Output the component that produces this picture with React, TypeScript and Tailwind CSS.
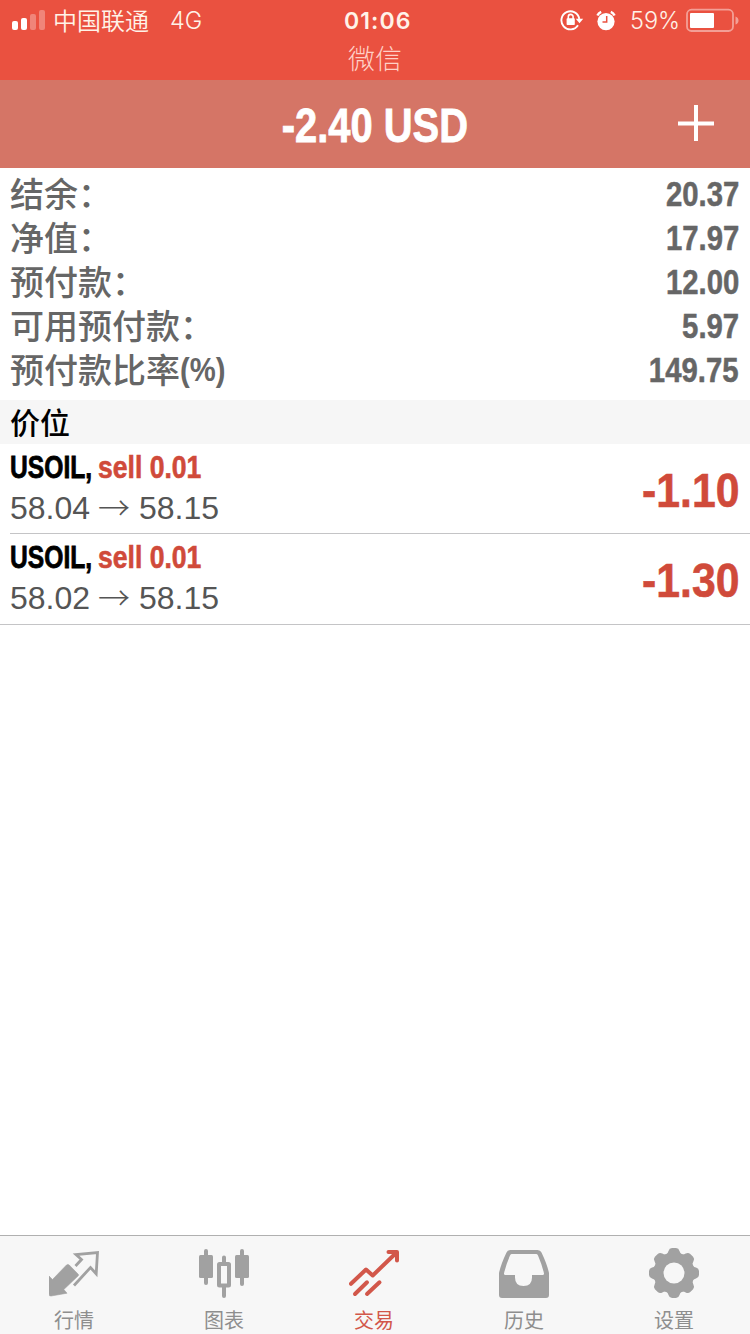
import type { ReactNode } from "react"

const RED = "#d2574a"

const ACCOUNT = [
  { label: "结余：", value: "20.37" },
  { label: "净值：", value: "17.97" },
  { label: "预付款：", value: "12.00" },
  { label: "可用预付款：", value: "5.97" },
  { label: "预付款比率", suffix: "(%)", value: "149.75" },
]

const POSITIONS = [
  { symbol: "USOIL,", side: "sell 0.01", open: "58.04", current: "58.15", profit: "-1.10" },
  { symbol: "USOIL,", side: "sell 0.01", open: "58.02", current: "58.15", profit: "-1.30" },
]

function StatusBar() {
  return (
    <div className="h-20 bg-[#ea5140] text-[#fff3e8]">
      <div className="relative flex h-10 items-center pl-3 pr-[11px]">
        <svg width="34" height="20" viewBox="0 0 34 20" fill="#fff">
          <rect x="0" y="11" width="6" height="9" rx="2" />
          <rect x="9" y="8" width="6" height="12" rx="2" />
          <rect x="18" y="4" width="6" height="16" rx="2" opacity="0.3" />
          <rect x="27" y="0" width="6" height="20" rx="2" opacity="0.3" />
        </svg>
        <span className="ml-[7px] w-[117px] font-['Noto_Sans_CJK_SC',sans-serif] text-[24px] leading-10 font-[350]">中国联通</span>
        <span className="pt-0.5 font-[Inter,sans-serif] text-[23.5px] leading-10 font-light">4G</span>
        <span className="absolute left-[344px] top-0 font-[Inter,sans-serif] text-[23px] leading-[43px] font-semibold tracking-[1.1px]">
          01:06
        </span>

        <div className="ml-auto flex items-center">
          {/* Rotation lock */}
          <svg width="24" height="22" viewBox="0 0 24 22" fill="none">
            <path d="M18 16.200A9 9 0 1 1 19.300 10" stroke="#fff" strokeWidth="1.9" />
            <path d="M15.800 9.800h7.400l-3.700 4.400z" fill="#fff" />
            <rect x="6.600" y="9.300" width="8.200" height="6.700" rx="0.8" fill="#fff" />
            <path d="M8.300 10V7.800a2.400 2.400 0 0 1 4.800 0V10" stroke="#fff" strokeWidth="1.600" />
          </svg>
          {/* Alarm */}
          <svg className="ml-[12px]" width="20" height="21" viewBox="0 0 20 21" fill="none">
            <circle cx="10" cy="11.600" r="8.600" fill="#fff" />
            <path d="M1.400 5.400Q2.500 3 5.200 1.900M14.800 1.900Q17.500 3 18.600 5.400" stroke="#fff" strokeWidth="2.400" />
            <path d="M10.700 6v6H6.500" stroke="#ea5140" strokeWidth="1.500" />
          </svg>
          <span className="ml-[14px] w-[56px] pt-0.5 font-[Inter,sans-serif] text-[23.5px] leading-10 font-light">59%</span>
          <svg width="53" height="24" viewBox="0 0 53 24" fill="none">
            <rect x="1" y="1.700" width="46" height="21.300" rx="4.500" stroke="#fff" strokeWidth="1.800" opacity="0.45" />
            <rect x="4" y="5" width="24" height="15" rx="1" fill="#fff" />
            <path d="M49.500 8.500v8q3-1 3-4t-3-4" fill="#fff" opacity="0.45" />
          </svg>
        </div>
      </div>
      <div className="text-center font-['Noto_Sans_CJK_SC',sans-serif] text-[27px] leading-[36px] font-light text-[#ffd0c6]">微信</div>
    </div>
  )
}

function Header() {
  return (
    <div className="relative flex h-[88px] items-center justify-center bg-[#d57566] text-white">
      <h1 className="origin-center scale-x-[0.84] whitespace-nowrap pt-[3px] text-[47.5px] leading-none font-bold [-webkit-text-stroke:0.8px]">-2.40 USD</h1>
      <svg className="absolute right-9 top-[25px]" width="36" height="36" viewBox="0 0 36 36" stroke="#fff" strokeWidth="4">
        <path d="M0 18.500h36M18 0v36" />
      </svg>
    </div>
  )
}

function Account() {
  return (
    <div className="h-[232px] pt-[3px] pr-[11px] pl-[10px] text-[#666]">
      {ACCOUNT.map((row) => (
        <div key={row.label} className="flex h-11 items-center justify-between font-bold">
          <div className="flex items-center">
            <span lang="zh-CN" className="font-['Noto_Sans_CJK_SC',sans-serif] text-[34px] leading-[44px] font-medium">{row.label}</span>
            {row.suffix && <span className="origin-left scale-x-[0.86] text-[34px] leading-[44px]">{row.suffix}</span>}
          </div>
          <span className="origin-right scale-x-[0.85] pt-px text-[34.5px] leading-[44px] [-webkit-text-stroke:0.5px]">{row.value}</span>
        </div>
      ))}
    </div>
  )
}

function Positions() {
  return (
    <div>
      <div className="h-11 bg-[#f6f6f6] px-[10px] font-['Noto_Sans_CJK_SC',sans-serif] text-[30px] leading-[42px] font-medium text-black">
        价位
      </div>
      {POSITIONS.map((p, i) => (
        <div key={p.open} className={i === POSITIONS.length - 1 ? "h-[91px] border-b border-[#c4c4c6] pl-[10px]" : "h-[90px] pl-[10px]"}>
          <div
            className={
              i === POSITIONS.length - 1
                ? "flex h-[89px] items-center justify-between pr-[11px]"
                : "flex h-[90px] items-center justify-between border-b border-[#c4c4c6] pr-[11px]"
            }
          >
            <div className="h-full pt-[3px]">
              <div className="flex text-[32px] leading-10 font-bold">
                <span className="w-[88px] origin-left scale-x-[0.77] whitespace-nowrap text-black [-webkit-text-stroke:0.8px]">{p.symbol}</span>
                <span className="origin-left scale-x-[0.83] whitespace-nowrap text-[#d04a3a] [-webkit-text-stroke:0.6px]">{p.side}</span>
              </div>
              <div className="flex pt-px text-[32px] leading-10 text-[#555]">
                <span className="w-[88px]">{p.open}</span>
                <span className="w-[41px] -translate-y-[2px] font-['Noto_Sans_CJK_SC',sans-serif] font-light">→</span>
                <span>{p.current}</span>
              </div>
            </div>
            <span className="origin-right scale-x-[0.89] pt-[4px] text-[48px] leading-none font-bold text-[#d04a3a] [-webkit-text-stroke:0.6px]">
              {p.profit}
            </span>
          </div>
        </div>
      ))}
    </div>
  )
}

function QuotesIcon() {
  return (
    <svg width="50" height="50" viewBox="0 0 50 50" fill="none">
      <path d="M0 28l3.500 3.500L17.500 17q1.500-1.200 2.700 0L29 26q1 1 0 2L14.800 41.500l3.200 3.700L2 48q-2 .300-2-2z" fill="#a1a1a1" stroke="#a1a1a1" strokeWidth="0.600" />
      <path d="M26.500 18l6-6.500L27 6.500 48.500 4.500 47.200 25.800 41.500 19.500 25 37.500" stroke="#a1a1a1" strokeWidth="2.800" />
    </svg>
  )
}

function ChartIcon() {
  return (
    <svg width="50" height="50" viewBox="0 0 50 50" fill="none">
      <path d="M7 3v32M43 3v33M25 9.500v38.500" stroke="#a1a1a1" strokeWidth="4" strokeLinecap="round" />
      <rect x="0" y="7" width="14" height="23" rx="1.500" fill="#a1a1a1" />
      <rect x="36" y="7" width="14" height="23" rx="1.500" fill="#a1a1a1" />
      <rect x="20" y="16" width="10" height="21.500" rx="0.500" fill="#f7f7f7" stroke="#a1a1a1" strokeWidth="4" />
    </svg>
  )
}

function TradeIcon() {
  return (
    <svg width="50" height="50" viewBox="0 0 50 50" fill="none" stroke={RED} strokeWidth="4" strokeLinecap="round" strokeLinejoin="round">
      <path d="M2 35.800L17 21.500l6.700 6L46 6" />
      <path d="M39.500 4h8.500v8.500" />
      <path d="M41 4h7.500v7.500z" fill={RED} stroke="none" />
      <path d="M6 46L18 34.300M18 46l12.500-11.700" />
    </svg>
  )
}

function HistoryIcon() {
  return (
    <svg width="50" height="50" viewBox="0 0 50 50">
      <path
        fill="#a1a1a1"
        fillRule="evenodd"
        d="M11.500 2h27q3 0 4 2.500Q48 16 50 25v22q0 3-3 3H3q-3 0-3-3V25Q2 16 7.500 4.500 8.500 2 11.500 2zm1 4q-1 0-1.500 1.500Q6.500 18 5 25.500 4.800 27 6.500 27H16v2.500q0 8.500 8.500 8.500t8.500-8.500V27h10.500q1.700 0 1.500-1.500Q43.500 18 39 7.500 38.500 6 37.500 6z"
      />
    </svg>
  )
}

function SettingsIcon() {
  return (
    <svg width="50" height="50" viewBox="0 0 50 50">
      <g fill="#a1a1a1">
        <circle cx="25" cy="25" r="20.500" />
        {[0, 45, 90, 135, 180, 225, 270, 315].map((a) => (
          <path key={a} transform={`rotate(${a} 25 25)`} d="M16.500 7Q19 5.500 19.500 3 20.200.200 23 0h4q2.800.200 3.500 3 .5 2.500 3 4z" />
        ))}
      </g>
      <circle cx="25" cy="25" r="10.500" fill="#f7f7f7" />
    </svg>
  )
}

const TABS: { label: string; icon: ReactNode; active?: boolean }[] = [
  { label: "行情", icon: <QuotesIcon /> },
  { label: "图表", icon: <ChartIcon /> },
  { label: "交易", icon: <TradeIcon />, active: true },
  { label: "历史", icon: <HistoryIcon /> },
  { label: "设置", icon: <SettingsIcon /> },
]

function TabBar() {
  return (
    <nav className="grid h-[99px] grid-cols-5 border-t border-[#b0b0b0] bg-[#f7f7f7]">
      {TABS.map((tab) => (
        <div key={tab.label} className="flex flex-col items-center pt-3 pr-0.5">
          {tab.icon}
          <span
            className={
              tab.active
                ? "mt-[7px] font-['Noto_Sans_CJK_SC',sans-serif] text-[20px] leading-[30px] text-[#d2574a]"
                : "mt-[7px] font-['Noto_Sans_CJK_SC',sans-serif] text-[20px] leading-[30px] text-[#8e8e8e]"
            }
          >
            {tab.label}
          </span>
        </div>
      ))}
    </nav>
  )
}

export default function App() {
  return (
    <div className="flex h-[1334px] w-[750px] flex-col overflow-hidden bg-white font-['Liberation_Sans',Arial,sans-serif]">
      <StatusBar />
      <Header />
      <main className="flex-1">
        <Account />
        <Positions />
      </main>
      <TabBar />
    </div>
  )
}
